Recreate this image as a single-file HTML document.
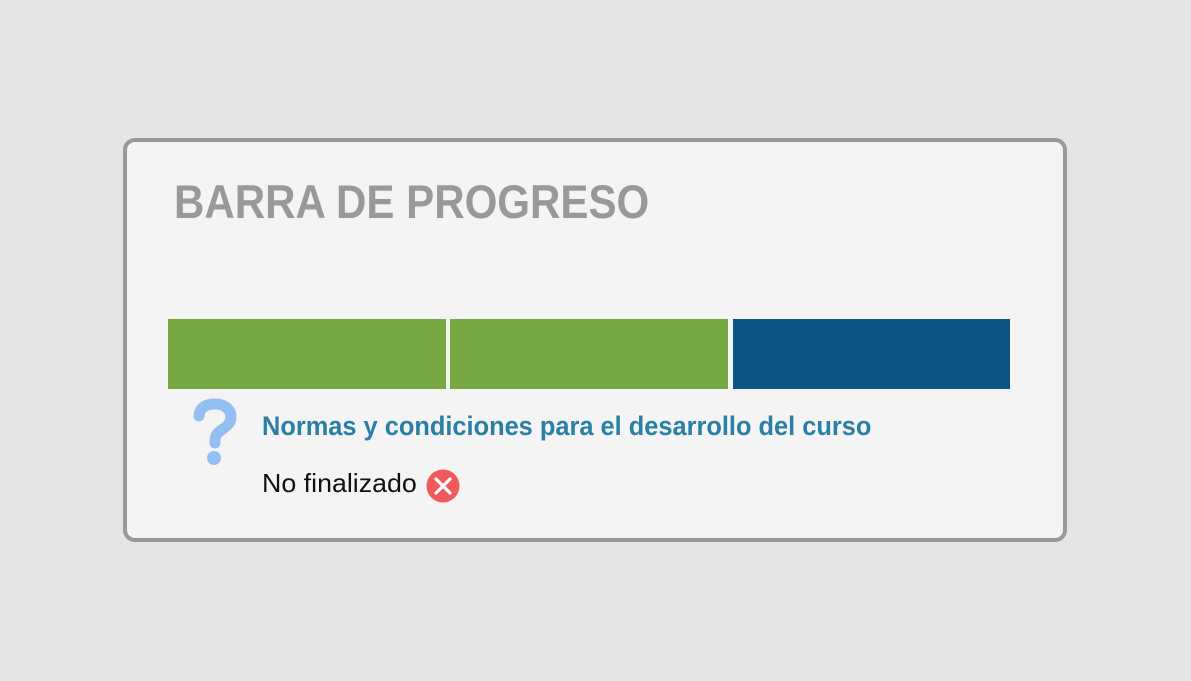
<!DOCTYPE html>
<html><head><meta charset="utf-8"><style>
html,body{margin:0;padding:0;}
body{width:1191px;height:681px;background:#e5e5e5;position:relative;overflow:hidden;font-family:"Liberation Sans",sans-serif;}
.box{position:absolute;left:123px;top:138px;width:936px;height:396px;border:4px solid #999;border-radius:12px;background:#f4f4f4;}
.t{position:absolute;left:174px;top:174px;font-size:47px;font-weight:bold;color:#999;white-space:nowrap;transform-origin:0 0;transform:scaleX(0.895);line-height:56px;}
.bar{position:absolute;top:319px;height:70px;}
.n{position:absolute;left:262px;top:409px;font-size:27px;font-weight:bold;color:#2a7fa5;white-space:nowrap;transform-origin:0 0;transform:scaleX(0.94);line-height:34px;}
.f{position:absolute;left:262px;top:466px;font-size:26px;color:#111;white-space:nowrap;transform-origin:0 0;transform:scaleX(1.03);line-height:34px;}
</style></head><body>
<div class="box"></div>
<div class="t">BARRA DE PROGRESO</div>
<div class="bar" style="left:168px;width:278px;background:#77a942"></div>
<div class="bar" style="left:450px;width:278px;background:#77a942"></div>
<div class="bar" style="left:733px;width:277px;background:#0b5485"></div>
<svg style="position:absolute;left:188px;top:398px" width="54" height="72" viewBox="0 0 54 72">
<path d="M11 18 C12 8 20 6 27 6 C36 6 43 11 43 19 C43 28 33 31 29 36 C27 39 27 42 27 45" fill="none" stroke="#94bff2" stroke-width="11" stroke-linecap="round"/>
<circle cx="26" cy="60" r="7" fill="#94bff2"/>
</svg>
<div class="n">Normas y condiciones para el desarrollo del curso</div>
<div class="f">No finalizado</div>
<svg style="position:absolute;left:426px;top:469px" width="34" height="34" viewBox="0 0 34 34">
<circle cx="17" cy="17" r="16.5" fill="#f05a5a"/>
<path d="M10 10L24 24M24 10L10 24" stroke="#fff" stroke-width="3.2" stroke-linecap="round"/>
</svg>
</body></html>
